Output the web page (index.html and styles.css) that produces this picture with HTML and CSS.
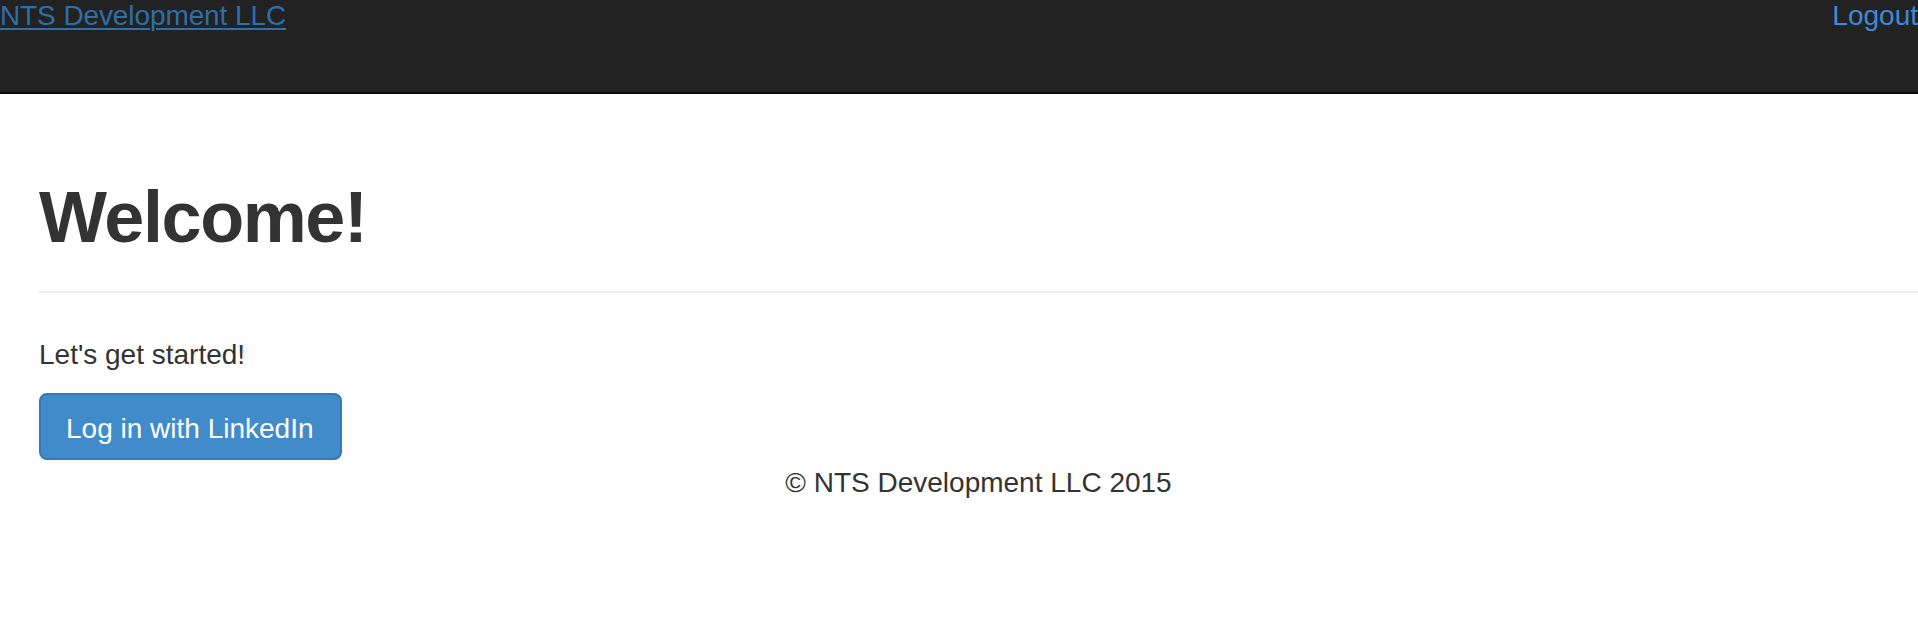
FILE: index.html
```html
<!DOCTYPE html>
<html>
<head>
<meta charset="utf-8">
<title>NTS Development LLC</title>
<link rel="stylesheet" href="styles.css">
</head>
<body>
<header class="navbar">
  <a class="brand" href="#">NTS Development LLC</a>
  <a class="logout" href="#">Logout</a>
</header>
<main class="container">
  <div class="page-header">
    <h1 class="title">Welcome!</h1>
  </div>
  <p class="lead-text">Let's get started!</p>
  <a class="btn" href="#">Log in with LinkedIn</a>
  <footer class="footer">© NTS Development LLC 2015</footer>
</main>
</body>
</html>
```

FILE: styles.css
```css
* { box-sizing: border-box; }
html, body {
  margin: 0;
  padding: 0;
  background: #fff;
}
body {
  font-family: "Liberation Sans", Arial, Helvetica, sans-serif;
  font-size: 28px;
  line-height: 40px;
  color: #333;
}
.navbar {
  display: flex;
  justify-content: space-between;
  align-items: flex-start;
  height: 94px;
  background: #222;
  border-bottom: 2px solid #080808;
}
.brand {
  color: #2f6ea9;
  text-decoration: underline;
  text-decoration-thickness: 2px;
  text-underline-offset: 3px;
  line-height: 32px;
  letter-spacing: -0.1px;
}
.logout {
  color: #3f8ad6;
  text-decoration: none;
  line-height: 32px;
}
.container {
  padding-left: 39px;
}
.page-header {
  padding-top: 84px;
  padding-bottom: 34px;
  border-bottom: 2px solid #eee;
}
.title {
  margin: 0;
  font-size: 72px;
  line-height: 79px;
  font-weight: 700;
  letter-spacing: -1.4px;
  color: #333;
}
.lead-text {
  margin: 42px 0 18px;
}
.btn {
  display: inline-block;
  height: 67px;
  padding: 14px 26px 9px 25px;
  border: 2px solid #3479b9;
  border-radius: 8px;
  background: #428bca;
  color: #fff;
  text-decoration: none;
  white-space: nowrap;
}
.footer {
  margin-top: 3px;
  text-align: center;
}
```
